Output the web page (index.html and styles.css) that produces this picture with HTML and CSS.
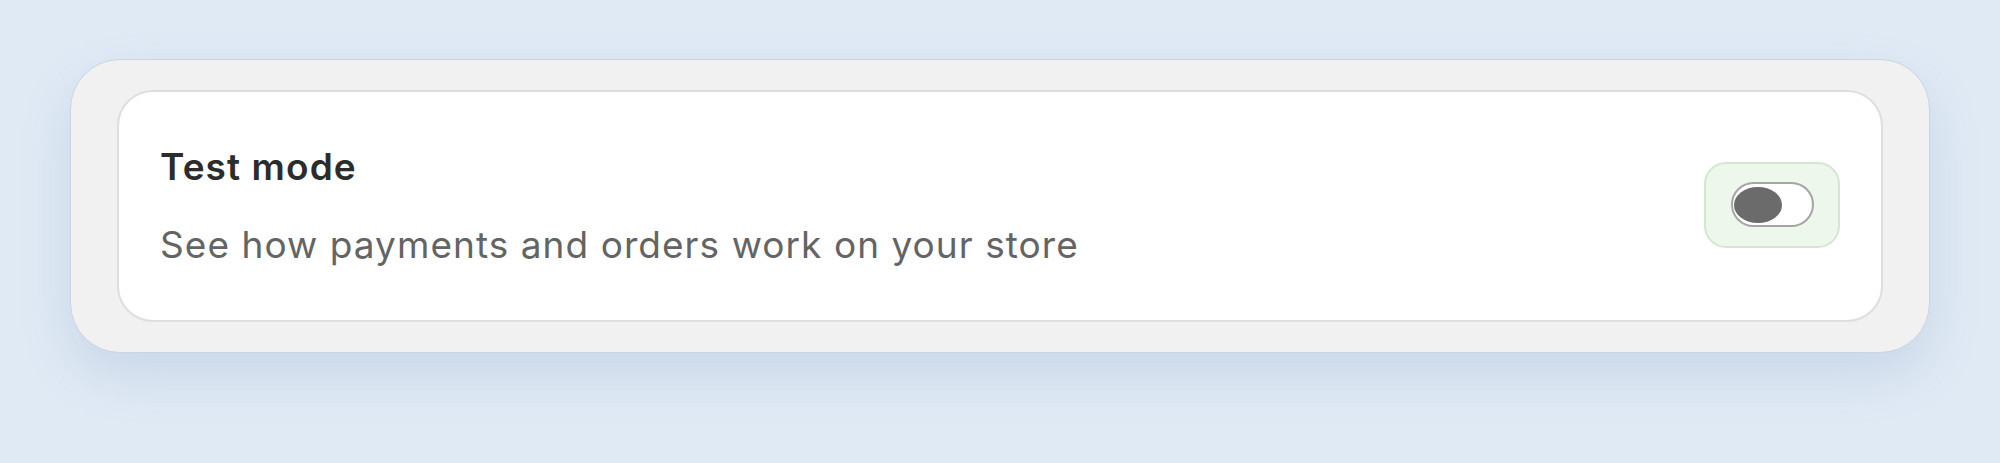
FILE: index.html
```html
<!DOCTYPE html>
<html lang="en">
<head>
<meta charset="utf-8">
<title>Test mode</title>
<link rel="stylesheet" href="styles.css">
</head>
<body>
  <div class="frame">
    <div class="panel">
      <div class="setting">
        <div class="texts">
          <div class="title">Test mode</div>
          <div class="desc">See how payments and orders work on your store</div>
        </div>
        <div class="toggle-wrap">
          <div class="track" role="switch" aria-checked="false">
            <div class="knob"></div>
          </div>
        </div>
      </div>
    </div>
  </div>
</body>
</html>
```

FILE: styles.css
```css
* { box-sizing: border-box; }
html, body { margin: 0; padding: 0; }
body {
  background: #e0eaf5;
  font-family: Inter, "Noto Sans", "Liberation Sans", sans-serif;
  width: 2000px;
  height: 463px;
  overflow: hidden;
}
.frame {
  padding: 59px 70px 0 70px;
}
.panel {
  background: #f1f1f1;
  border: 1px solid #c9d5e2;
  border-radius: 50px;
  padding: 30px 46px;
  box-shadow: 0 22px 50px rgba(110, 140, 180, 0.20);
}
.setting {
  background: #ffffff;
  border: 2px solid #dedede;
  border-radius: 36px;
  height: 232px;
  padding: 0 41px 0 41px;
  display: flex;
  align-items: center;
  justify-content: space-between;
}
.texts {
  display: flex;
  flex-direction: column;
  gap: 34px;
}
.title {
  font-size: 37px;
  line-height: 44px;
  font-weight: 600;
  letter-spacing: 1.1px;
  color: #2c2c2c;
}
.desc {
  font-size: 37px;
  line-height: 44px;
  font-weight: 400;
  letter-spacing: 1.05px;
  color: #646464;
}
.toggle-wrap {
  width: 136px;
  height: 86px;
  background: #eef7ec;
  border: 2px solid #d3e7d0;
  border-radius: 22px;
  display: flex;
  align-items: center;
  justify-content: center;
  margin-top: -3px;
}
.track {
  width: 83px;
  height: 45px;
  border: 2.5px solid #a5a5a5;
  border-radius: 23px;
  background: #ffffff;
  display: flex;
  align-items: center;
  padding-left: 1.5px;
}
.knob {
  width: 48px;
  height: 36px;
  border-radius: 50%;
  background: #6b6b6b;
}
```
